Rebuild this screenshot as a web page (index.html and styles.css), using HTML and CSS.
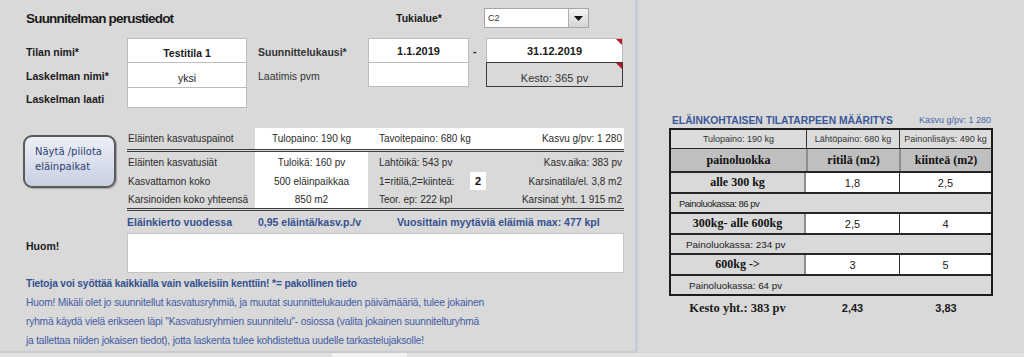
FILE: index.html
```html
<!DOCTYPE html>
<html lang="fi">
<head>
<meta charset="utf-8">
<title>Suunnitelman perustiedot</title>
<link rel="stylesheet" href="styles.css">
</head>
<body>
<div class="screen">
  <div class="main">
    <section class="left">
      <div class="top">
        <h1 class="title">Suunnitelman perustiedot</h1>
        <div class="tuki-label">Tukialue*</div>
        <div class="combo">
          <span class="combo-val">C2</span>
          <span class="combo-btn"><svg width="9" height="5" viewBox="0 0 9 5"><path d="M0 0H9L4.5 5Z" fill="#111"/></svg></span>
        </div>

        <div class="lbl row-b">Tilan nimi*</div>
        <div class="lbl row-c">Laskelman nimi*</div>
        <div class="lbl row-d">Laskelman laati</div>

        <div class="box name-box">
          <div class="cell h24 low strong">Testitila 1</div>
          <div class="cell h25 low">yksi</div>
          <div class="cell h21"></div>
        </div>

        <div class="lbl2 row-b strong">Suunnittelukausi*</div>
        <div class="lbl2 row-c">Laatimis pvm</div>

        <div class="box date-box">
          <div class="cell h24 strong">1.1.2019</div>
          <div class="cell h25"></div>
        </div>

        <div class="dash">-</div>

        <div class="box end-box">
          <div class="cell h24 strong tri">31.12.2019</div>
          <div class="cell h25 low gray-cell tri">Kesto: 365 pv</div>
        </div>
      </div>

      <div class="mid">
        <div class="toggle-btn">Näytä /piilota<br>eläinpaikat</div>
        <div class="ktable">
          <div class="krow k1 dbl">
            <div class="kc lab">Eläinten kasvatuspainot</div>
            <div class="kc v1 white">Tulopaino: 190 kg</div>
            <div class="kc v2 white span2">Tavoitepaino: 680 kg</div>
            <div class="kc v3 white">Kasvu g/pv: 1 280</div>
          </div>
          <div class="krow k2">
            <div class="kc lab">Eläinten kasvatusiät</div>
            <div class="kc v1 white">Tuloikä: 160 pv</div>
            <div class="kc v2 span2">Lahtöikä: 543 pv</div>
            <div class="kc v3">Kasv.aika: 383 pv</div>
          </div>
          <div class="krow k3">
            <div class="kc lab">Kasvattamon koko</div>
            <div class="kc v1 white">500 eläinpaikkaa</div>
            <div class="kc v2">1=ritilä,2=kiinteä:</div>
            <div class="kc choice">2</div>
            <div class="kc v3">Karsinatila/el. 3,8 m2</div>
          </div>
          <div class="krow k4 dbl">
            <div class="kc lab">Karsinoiden koko yhteensä</div>
            <div class="kc v1 white">850 m2</div>
            <div class="kc v2 span2">Teor. ep: 222 kpl</div>
            <div class="kc v3">Karsinat yht. 1 915 m2</div>
          </div>
          <div class="blue-row">
            <span>Eläinkierto vuodessa</span>
            <span>0,95 eläintä/kasv.p./v</span>
            <span>Vuosittain myytäviä eläimiä max: 477 kpl</span>
          </div>
        </div>
      </div>

      <div class="huom">
        <div class="huom-label">Huom!</div>
        <div class="huom-box"></div>
      </div>

      <div class="notes">
        <p class="notes-head">Tietoja voi syöttää kaikkialla vain valkeisiin kenttiin! *= pakollinen tieto</p>
        <p class="notes-line">Huom! Mikäli olet jo suunnitellut kasvatusryhmiä, ja muutat suunnittelukauden päivämääriä, tulee jokainen</p>
        <p class="notes-line">ryhmä käydä vielä erikseen läpi "Kasvatusryhmien suunnitelu"- osiossa (valita jokainen suunnitelturyhmä</p>
        <p class="notes-line">ja tallettaa niiden jokaisen tiedot), jotta laskenta tulee kohdistettua uudelle tarkastelujaksolle!</p>
      </div>
    </section>

    <section class="right">
      <div class="rt-head">
        <span class="rt-title">ELÄINKOHTAISEN TILATARPEEN MÄÄRITYS</span>
        <span class="rt-kasvu">Kasvu g/pv: 1 280</span>
      </div>
      <div class="rtable">
        <div class="rrow info">
          <div class="rc">Tulopaino: 190 kg</div>
          <div class="rc">Lähtöpaino: 680 kg</div>
          <div class="rc">Painonlisäys: 490 kg</div>
        </div>
        <div class="rrow head">
          <div class="rc">painoluokka</div>
          <div class="rc">ritilä (m2)</div>
          <div class="rc">kiinteä (m2)</div>
        </div>
        <div class="rrow data">
          <div class="rc cls">alle 300 kg</div>
          <div class="rc val">1,8</div>
          <div class="rc val">2,5</div>
        </div>
        <div class="rrow days d1"><div class="rc">Painoluokassa: 86 pv</div></div>
        <div class="rrow data">
          <div class="rc cls">300kg- alle 600kg</div>
          <div class="rc val">2,5</div>
          <div class="rc val">4</div>
        </div>
        <div class="rrow days d2"><div class="rc">Painoluokassa: 234 pv</div></div>
        <div class="rrow data">
          <div class="rc cls">600kg -&gt;</div>
          <div class="rc val">3</div>
          <div class="rc val">5</div>
        </div>
        <div class="rrow days d3"><div class="rc">Painoluokassa: 64 pv</div></div>
      </div>
      <div class="rfoot">
        <div class="rf-lab">Kesto yht.: 383 pv</div>
        <div class="rf-val">2,43</div>
        <div class="rf-val">3,83</div>
      </div>
    </section>
  </div>
  <div class="strip"><span class="strip-tab"></span></div>
</div>
</body>
</html>
```

FILE: styles.css
```css
* { box-sizing: border-box; }
html, body { margin: 0; padding: 0; }
body {
  background: #d9d9d9;
  font-family: "Liberation Sans", Arial, sans-serif;
  font-size: 10.5px;
  color: #1a1a1a;
  width: 1024px;
  height: 357px;
  overflow: hidden;
}
.screen { display: flex; flex-direction: column; height: 357px; }
.main { display: flex; height: 353px; }
.strong { font-weight: bold; }

/* ---------- left panel ---------- */
.left {
  width: 638px;
  border-right: 3px solid #c7cbd3;
  border-bottom: 2px solid #c7cbd3;
  display: flex;
  flex-direction: column;
}
.top {
  display: grid;
  padding-left: 26px;
  grid-template-columns: 101px 120px 11px 110px 101px 17px 138px;
  grid-template-rows: 38px 24px 25px 21px;
}
.title {
  grid-column: 1 / 4;
  grid-row: 1;
  margin: 0;
  padding-top: 10px;
  font-size: 13.5px;
  line-height: 17px;
  letter-spacing: -0.8px;
  font-weight: bold;
}
.tuki-label {
  grid-column: 5 / 7;
  grid-row: 1;
  padding: 12px 0 0 28px;
  font-weight: bold;
  line-height: 13px;
}
.combo {
  grid-column: 7;
  grid-row: 1;
  margin: 8px 0 0 -2px;
  width: 105px;
  height: 20px;
  background: #fff;
  border: 1px solid #a6a6a6;
  display: flex;
}
.combo-val {
  flex: 1;
  font-size: 9px;
  line-height: 18px;
  padding-left: 3px;
  color: #333;
}
.combo-btn {
  width: 20px;
  border-left: 1px solid #b0b0b0;
  background: linear-gradient(#f4f4f4, #d6d6d6);
  display: flex;
  align-items: center;
  justify-content: center;
}
.lbl { grid-column: 1; font-weight: bold; align-self: center; padding-top: 3px; }
.lbl2 { grid-column: 4; align-self: center; padding-top: 3px; color: #333; }
.row-b { grid-row: 2; }
.row-c { grid-row: 3; }
.row-d { grid-row: 4; }

.box {
  background: #fff;
  border: 1px solid #bdbdbd;
  display: flex;
  flex-direction: column;
}
.name-box { grid-column: 2; grid-row: 2 / 5; }
.date-box { grid-column: 5; grid-row: 2 / 4; }
.end-box { grid-column: 7; grid-row: 2 / 4; margin-right: 1px; }
.cell {
  position: relative;
  display: flex;
  align-items: center;
  justify-content: center;
  line-height: 13px;
}
.cell + .cell { border-top: 1px solid #bdbdbd; }
.h24 { height: 23px; }
.h25 { height: 25px; }
.h21 { flex: 1; }
.low { align-items: flex-end; padding-bottom: 2px; }
.name-box .low { font-size: 10.5px; }
.date-box .strong, .end-box .strong { font-size: 11px; padding-top: 2px; }
.gray-cell {
  background: #d9d9d9;
  color: #333;
  font-size: 11px;
  padding-bottom: 1px;
  border: 1px solid #3a3a3a !important;
  margin: 0 -1px -1px;
}
.tri::after {
  content: "";
  position: absolute;
  top: 0;
  right: 0;
  border-style: solid;
  border-width: 0 6px 6px 0;
  border-color: transparent #c0141c transparent transparent;
}
.dash {
  grid-column: 6;
  grid-row: 2;
  align-self: center;
  padding: 2px 0 0 4px;
  font-weight: bold;
}

/* middle block */
.mid { display: flex; margin-top: 20px; }
.toggle-btn {
  margin: 7px 0 0 23px;
  width: 93px;
  height: 53px;
  border: 2px solid #5a5a5a;
  border-radius: 9px;
  background: linear-gradient(#eceff7, #c8d0e1);
  box-shadow: 1px 1px 1px rgba(0, 0, 0, 0.25);
  padding: 8px 0 0 10px;
  font-family: "DejaVu Sans", Verdana, sans-serif;
  font-size: 10px;
  line-height: 14.5px;
  color: #2c4270;
}
.ktable { margin-left: 11px; width: 497px; display: flex; flex-direction: column; }
.krow {
  display: grid;
  grid-template-columns: 128px 113px 102px 16px 138px;
  font-size: 10px;
  color: #2b2b2b;
}
.krow.dbl { border-bottom: 3px double #3c3c3c; }
.k1 { height: 24px; }
.k2 { height: 20px; }
.k3 { height: 19px; }
.k4 { height: 20px; }
.kc { display: flex; align-items: center; white-space: nowrap; }
.kc.lab { padding-left: 1px; }
.kc.white { background: #fff; }
.kc.v1 { justify-content: center; }
.kc.v2 { padding-left: 11px; }
.kc.span2 { grid-column: 3 / 5; }
.kc.v3 { justify-content: flex-end; padding-right: 2px; }
.kc.choice {
  background: #fff;
  justify-content: center;
  font-weight: bold;
  font-size: 11px;
  color: #111;
  height: 18px;
}
.blue-row {
  display: grid;
  grid-template-columns: 131px 139px 1fr;
  height: 22px;
  align-items: center;
  font-weight: bold;
  font-size: 10.5px;
  color: #34508e;
  white-space: nowrap;
}

.huom { display: flex; height: 40px; }
.huom-label {
  width: 127px;
  padding: 7px 0 0 26px;
  font-weight: bold;
}
.huom-box {
  width: 497px;
  background: #fff;
  border: 1px solid #c4c4c4;
}

.notes { padding: 1px 0 0 26px; }
.notes p { margin: 0; line-height: 19px; white-space: nowrap; font-size: 10.2px; }
.notes-head { font-weight: bold; color: #34508e; letter-spacing: -0.14px; }
.notes-line { color: #3f5ba3; letter-spacing: -0.18px; }

/* ---------- right panel ---------- */
.right { flex: 1; padding: 112px 0 0 31px; }
.rt-head {
  width: 324px;
  height: 16px;
  display: flex;
  justify-content: space-between;
  align-items: center;
  padding: 0 2px 0 3px;
  white-space: nowrap;
}
.rt-title { font-weight: bold; font-size: 10.3px; color: #3a5899; }
.rt-kasvu { font-size: 9px; color: #4765a8; }
.rtable {
  width: 324px;
  border: 2px solid #1c1c1c;
  display: flex;
  flex-direction: column;
}
.rrow {
  display: grid;
  grid-template-columns: 135px 93px 92px;
  white-space: nowrap;
}
.rc { display: flex; align-items: center; justify-content: center; }
.rrow + .rrow { border-top: 2px solid #262626; }
.rrow.info { height: 18px; background: #dcdcdc; font-size: 9px; color: #333; }
.rrow.info .rc + .rc { border-left: 1px solid #333; }
.rrow.head {
  height: 23px;
  background: #bfbfbf;
  border-top-width: 1px;
  font-family: "Liberation Serif", "Times New Roman", serif;
  font-weight: bold;
  font-size: 12px;
  color: #111;
}
.rrow.head .rc + .rc { border-left: 2px solid #8e8e8e; }
.rrow.data { height: 21px; }
.rrow.data .cls {
  background: #d9d9d9;
  font-family: "Liberation Serif", "Times New Roman", serif;
  font-weight: bold;
  font-size: 12px;
  color: #111;
  border-right: 2px solid #8e8e8e;
}
.rrow.data .val { background: #fff; font-size: 11px; color: #222; }
.rrow.data .val + .val { border-left: 1px solid #333; }
.rrow.days {
  height: 20px;
  grid-template-columns: 1fr;
  background: #d9d9d9;
  color: #222;
}
.rrow.days .rc { justify-content: flex-start; }
.rrow.d1 { font-size: 9.5px; letter-spacing: -0.5px; }
.rrow.d1 .rc { padding-left: 8px; }
.rrow.d2 { font-size: 9.9px; }
.rrow.d2 .rc { padding-left: 15px; }
.rrow.d3 { font-size: 9.8px; }
.rrow.d3 .rc { padding-left: 18px; }
.rfoot {
  width: 324px;
  display: grid;
  grid-template-columns: 137px 93px 94px;
  height: 24px;
  align-items: center;
  font-weight: bold;
  white-space: nowrap;
}
.rf-lab {
  text-align: center;
  font-family: "Liberation Serif", "Times New Roman", serif;
  font-size: 12.5px;
}
.rf-val { text-align: center; font-size: 11px; }

/* ---------- bottom strip ---------- */
.strip { height: 4px; background: #e2e2e2; position: relative; }
.strip-tab {
  display: block;
  margin-left: 332px;
  width: 75px;
  height: 4px;
  background: #f2f2f2;
}
```
